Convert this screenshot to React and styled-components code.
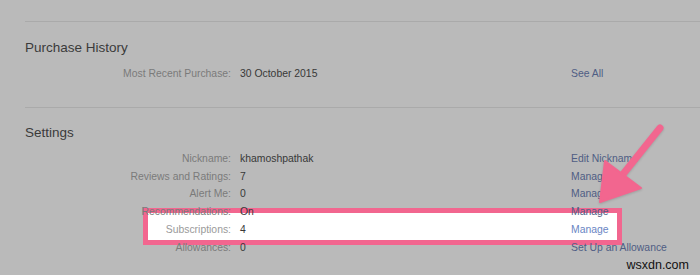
import React from 'react'
import styled, { createGlobalStyle } from 'styled-components'

const GlobalStyle = createGlobalStyle`
  html, body {
    margin: 0;
    padding: 0;
    background: #bababa;
  }
  body {
    font-family: "Liberation Sans", Arial, Helvetica, sans-serif;
  }
`

const Page = styled.div`
  position: relative;
  width: 700px;
  height: 275px;
  overflow: hidden;
  background: #bababa;
  padding-top: 21px;
  box-sizing: border-box;
`

const Section = styled.section`
  margin-left: 25px;
  border-top: 1px solid #aaaaaa;
  padding-top: ${p => p.$top}px;
  padding-bottom: ${p => p.$bottom}px;
`

const Heading = styled.h2`
  margin: 0 0 9px;
  font-size: 13.5px;
  line-height: 16px;
  font-weight: normal;
  color: #3a3a3a;
`

const Row = styled.div`
  position: relative;
  display: grid;
  grid-template-columns: 206px 322px 1fr;
  column-gap: 9px;
  font-size: 10.4px;
  line-height: 17.8px;
  white-space: nowrap;

  ${p => p.$highlight && `
    &::before {
      content: '';
      position: absolute;
      top: -13.4px;
      bottom: -5.8px;
      left: 118px;
      right: 78px;
      background: #ffffff;
      border: 5px solid #f2668f;
      box-sizing: border-box;
      z-index: 1;
    }
  `}
`

const Label = styled.span`
  position: relative;
  z-index: 2;
  text-align: right;
  color: ${p => (p.$lit ? '#9a9a9a' : '#7a7a7a')};
`

const Value = styled.span`
  position: relative;
  z-index: 2;
  color: #383838;
`

const Link = styled.span`
  position: relative;
  z-index: 2;
  color: ${p => (p.$lit ? '#6a86c4' : '#4f5d84')};
`

const Arrow = styled.svg`
  position: absolute;
  top: 0;
  left: 0;
  z-index: 5;
  pointer-events: none;
  filter: drop-shadow(0 1px 1px rgba(0, 0, 0, 0.15));
`

const Watermark = styled.div`
  position: absolute;
  right: 11px;
  bottom: 2px;
  z-index: 6;
  font-size: 12.5px;
  line-height: 16px;
  color: #111;
`

const settings = [
  ['Nickname:', 'khamoshpathak', 'Edit Nickname'],
  ['Reviews and Ratings:', '7', 'Manage'],
  ['Alert Me:', '0', 'Manage'],
  ['Recommendations:', 'On', 'Manage'],
  ['Subscriptions:', '4', 'Manage', true],
  ['Allowances:', '0', 'Set Up an Allowance'],
]

export default function App() {
  return (
    <>
      <GlobalStyle />
      <Page>
        <Section $top={18} $bottom={24}>
          <Heading>Purchase History</Heading>
          <Row>
            <Label>Most Recent Purchase:</Label>
            <Value>30 October 2015</Value>
            <Link>See All</Link>
          </Row>
        </Section>
        <Section $top={17} $bottom={0}>
          <Heading>Settings</Heading>
          {settings.map(([label, value, link, lit]) => (
            <Row key={label} $highlight={lit}>
              <Label $lit={lit}>{label}</Label>
              <Value>{value}</Value>
              <Link $lit={lit}>{link}</Link>
            </Row>
          ))}
        </Section>

        <Arrow width="700" height="275" viewBox="0 0 700 275">
          <line x1="660" y1="128" x2="620" y2="178" stroke="#f2668f" strokeWidth="7" strokeLinecap="round" />
          <polygon points="600,202 605,161 641,188" fill="#f2668f" strokeLinejoin="round" stroke="#f2668f" strokeWidth="2" />
        </Arrow>
        <Watermark>wsxdn.com</Watermark>
      </Page>
    </>
  )
}
